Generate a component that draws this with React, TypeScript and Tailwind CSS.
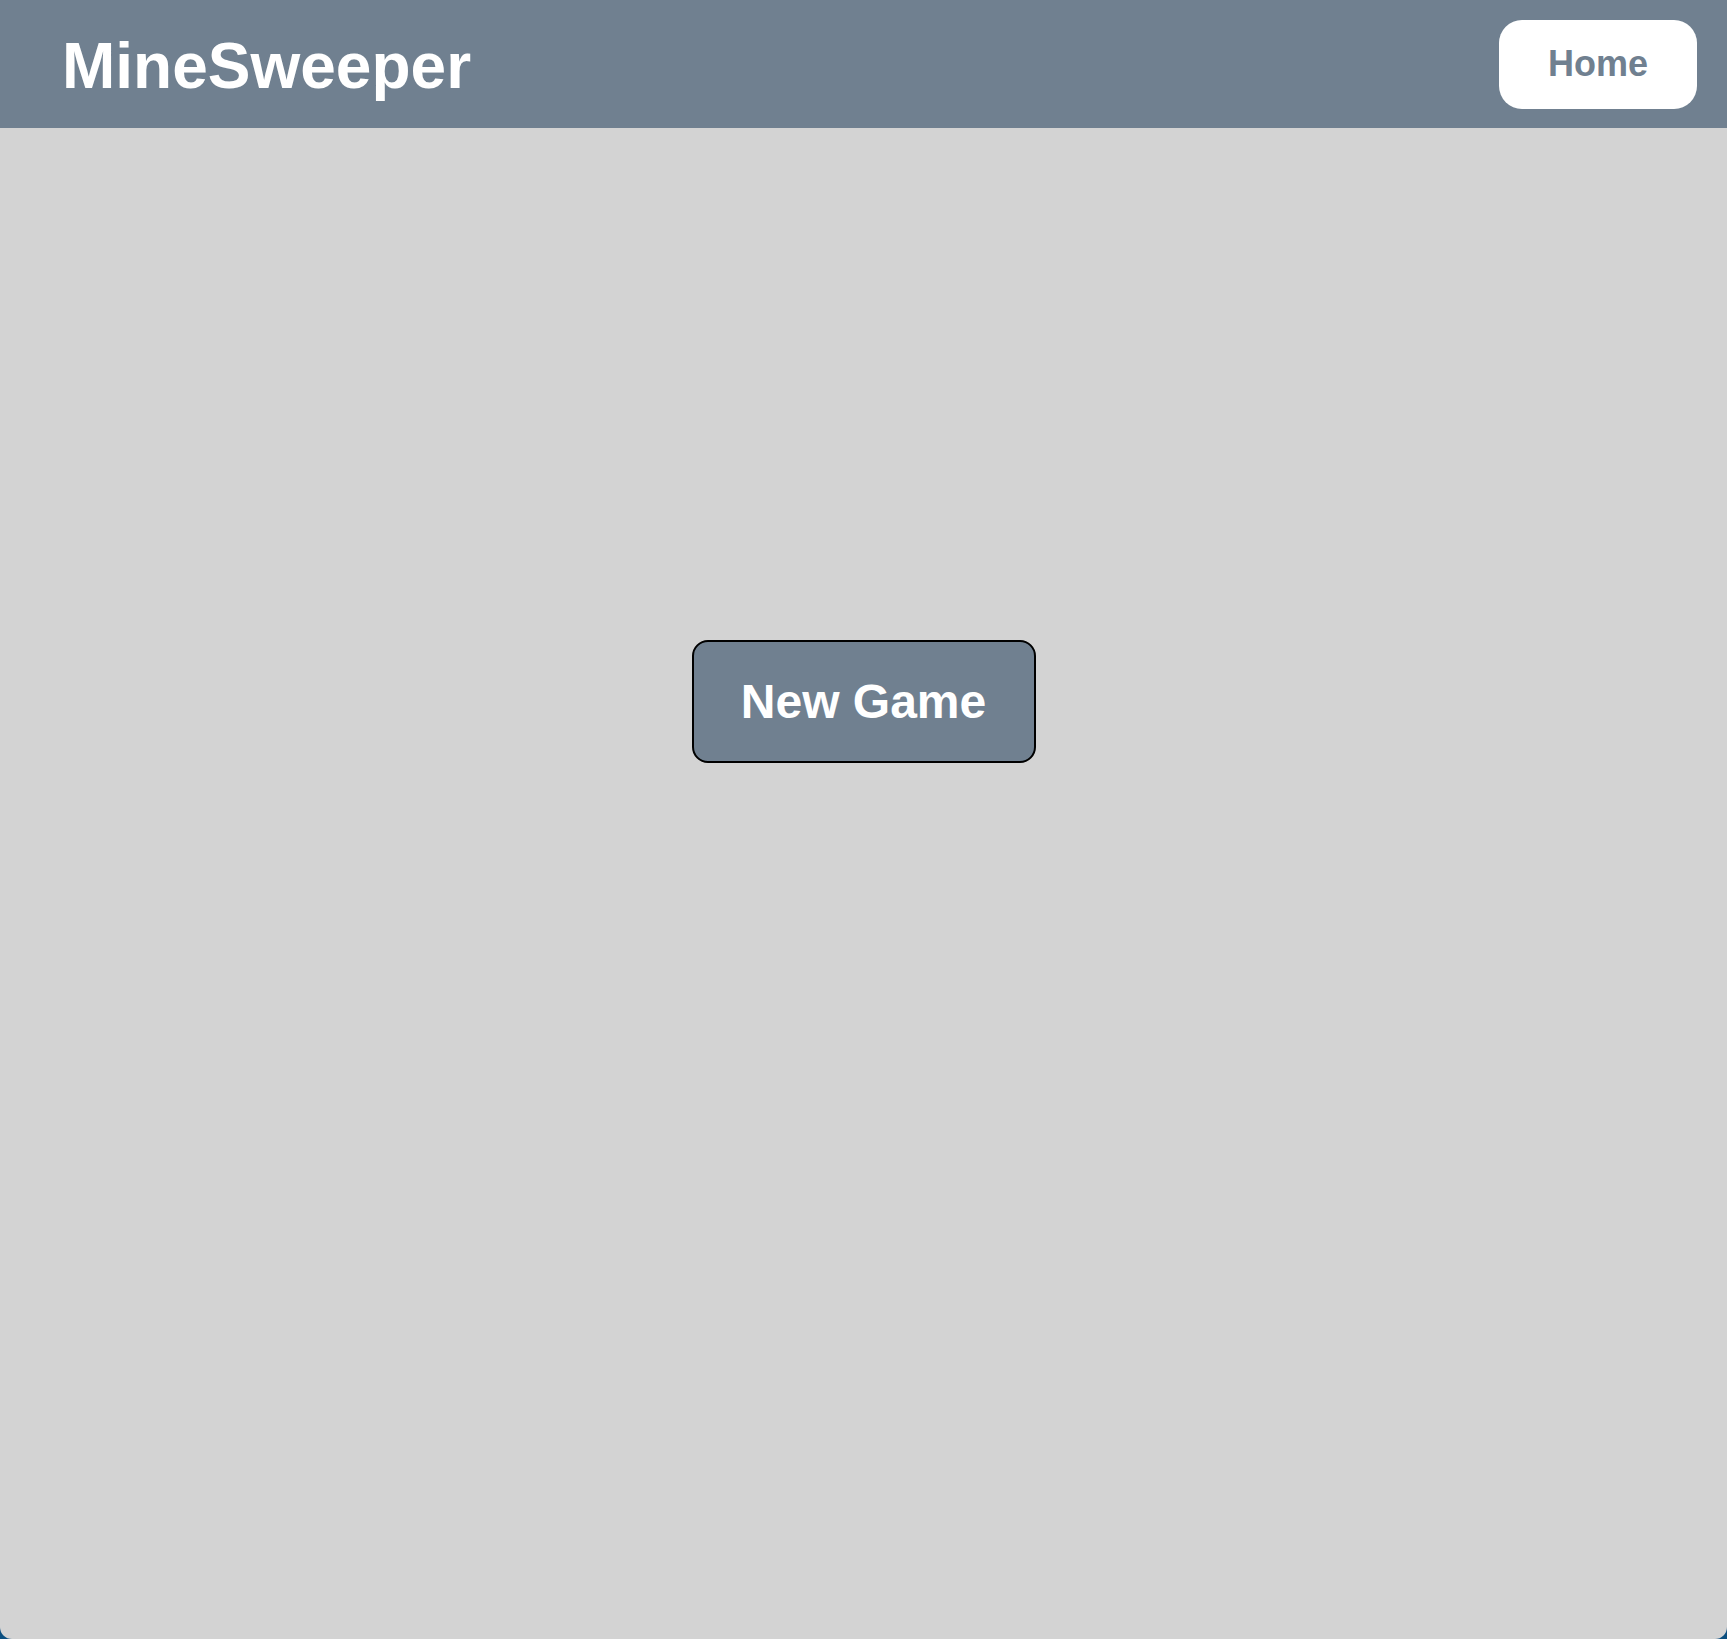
import React from 'react';

export default function App() {
  return (
    <div className="min-h-screen bg-[#0b4f80]" style={{ fontFamily: '"Liberation Sans", Arial, sans-serif' }}>
      <div className="flex flex-col h-[1639px] bg-[#d3d3d3] rounded-b-[12px] overflow-hidden">
        {/* Header */}
        <header className="flex items-center justify-between h-[128px] bg-[#708090] pl-[62px] pr-[30px] shrink-0">
          <h1 className="text-[64px] font-bold text-white leading-none pt-[4px]">MineSweeper</h1>
          <button className="w-[198px] h-[89px] bg-white rounded-[23px] text-[36px] font-bold text-[#708090] leading-none">
            Home
          </button>
        </header>

        {/* Main */}
        <main className="flex justify-center pt-[512px]">
          <button className="w-[344px] h-[123px] bg-[#708090] border-2 border-black rounded-[16px] text-[48px] font-bold text-white leading-none">
            New Game
          </button>
        </main>
      </div>
    </div>
  );
}
